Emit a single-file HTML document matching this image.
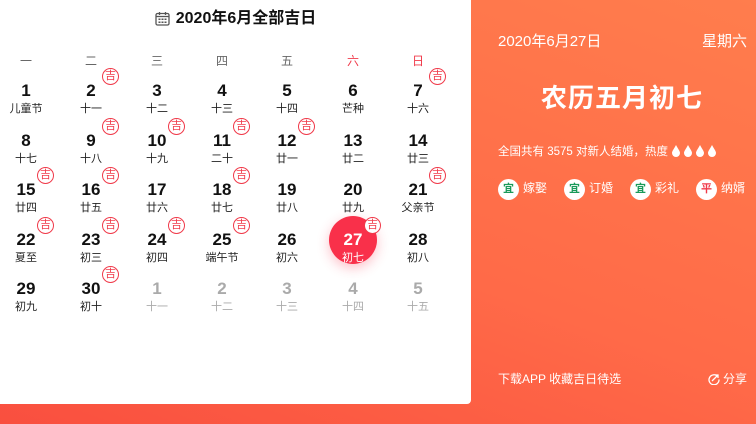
<!DOCTYPE html>
<html><head><meta charset="utf-8"><style>
*{margin:0;padding:0;box-sizing:border-box}
body{width:756px;height:424px;overflow:hidden;font-family:"Liberation Sans","Noto Sans CJK SC",sans-serif;background:linear-gradient(20deg,#f94f3f 0%,#ff6a48 45%,#ff7d4d 100%);position:relative}
.card{position:absolute;left:0;top:0;width:471px;height:404px;background:#fff;border-radius:0 0 4px 0}
.title{position:absolute;top:9px;left:0;width:471px;text-align:center;font-size:16px;font-weight:bold;color:#111;line-height:20px}
.title svg{vertical-align:-3px;margin-right:6px}
.wk{position:absolute;top:52px;width:40px;margin-left:-20px;text-align:center;font-size:12px;color:#666}
.d{position:absolute;width:56px;margin-left:-28px;text-align:center}
.n{font-size:17px;font-weight:bold;color:#111;line-height:20px;height:20px}
.l{font-size:11px;color:#222;line-height:14px;margin-top:1px}
.g .n{color:#aaa}.g .l{color:#aaa}
.ji{position:absolute;width:17px;height:17px;border:1.3px solid #f03a4a;border-radius:50%;color:#f03a4a;font-size:11px;line-height:14px;text-align:center;background:#fff}
.sel{position:absolute;left:329px;top:216px;width:48px;height:48px;border-radius:50%;background:#f9304a;box-shadow:0 4px 12px rgba(249,48,74,.3)}
.r{position:absolute;color:#fff}
.b{display:inline-block;width:21px;height:21px;border-radius:50%;background:#fff;color:#1a9a5a;font-size:11px;line-height:21px;text-align:center;margin-right:4px;font-weight:bold}
</style></head><body>
<div class="card">
<div class="title"><svg width="15" height="15" viewBox="0 0 15 15"><rect x="1" y="2.5" width="13" height="11.5" rx="1.5" fill="none" stroke="#555" stroke-width="1.3"/><line x1="1" y1="5.5" x2="14" y2="5.5" stroke="#555" stroke-width="1.3"/><line x1="4.5" y1="1" x2="4.5" y2="4" stroke="#555" stroke-width="1.3"/><line x1="10.5" y1="1" x2="10.5" y2="4" stroke="#555" stroke-width="1.3"/><g fill="#555"><rect x="3.5" y="7.5" width="2" height="1.5"/><rect x="6.5" y="7.5" width="2" height="1.5"/><rect x="9.5" y="7.5" width="2" height="1.5"/><rect x="3.5" y="10.5" width="2" height="1.5"/><rect x="6.5" y="10.5" width="2" height="1.5"/><rect x="9.5" y="10.5" width="2" height="1.5"/></g></svg>2020年6月全部吉日</div>
<div class="wk" style="left:26px">一</div><div class="wk" style="left:91px">二</div><div class="wk" style="left:157px">三</div><div class="wk" style="left:222px">四</div><div class="wk" style="left:287px">五</div><div class="wk" style="left:353px;color:#f03a4a">六</div><div class="wk" style="left:418px;color:#f03a4a">日</div>
<div id="g"></div>
</div>
<script>
var data=[["1","儿童节"],["2","十一",1],["3","十二"],["4","十三"],["5","十四"],["6","芒种"],["7","十六",1],
["8","十七"],["9","十八",1],["10","十九",1],["11","二十",1],["12","廿一",1],["13","廿二"],["14","廿三"],
["15","廿四",1],["16","廿五",1],["17","廿六"],["18","廿七",1],["19","廿八"],["20","廿九"],["21","父亲节",1],
["22","夏至",1],["23","初三",1],["24","初四",1],["25","端午节",1],["26","初六"],["27","初七",1,0,1],["28","初八"],
["29","初九"],["30","初十",1],["1","十一",0,1],["2","十二",0,1],["3","十三",0,1],["4","十四",0,1],["5","十五",0,1]];
var xs=[26,91,157,222,287,353,418],ys=[81,131,180,230,279],h="";
data.forEach(function(d,i){var x=xs[i%7],y=ys[Math.floor(i/7)];
if(d[4])h+='<div class="sel"></div>';
h+='<div class="d'+(d[3]?' g':'')+'" style="left:'+x+'px;top:'+y+'px'+(d[4]?';color:#fff':'')+'"><div class="n"'+(d[4]?' style="color:#fff"':'')+'>'+d[0]+'</div><div class="l"'+(d[4]?' style="color:#fff"':'')+'>'+d[1]+'</div></div>';
if(d[2])h+='<div class="ji" style="left:'+(x+11)+'px;top:'+(y-13)+'px">吉</div>';});
document.getElementById("g").innerHTML=h;
</script>
<div class="r" style="left:498px;top:30px;font-size:15px">2020年6月27日</div>
<div class="r" style="right:9px;top:30px;font-size:15px">星期六</div>
<div class="r" style="left:470px;width:304px;top:78px;text-align:center;font-size:26px;font-weight:bold;letter-spacing:1px">农历五月初七</div>
<div class="r" style="left:498px;top:143px;font-size:11.5px">全国共有 3575 对新人结婚，热度 <svg width="48" height="13" viewBox="0 0 48 13" style="vertical-align:-2px"><g fill="#fff"><path d="M5 1 C3 5 1 7 1 9 a4 4 0 0 0 8 0 C9 7 7 5 5 1z"/><path d="M17 1 C15 5 13 7 13 9 a4 4 0 0 0 8 0 C21 7 19 5 17 1z"/><path d="M29 1 C27 5 25 7 25 9 a4 4 0 0 0 8 0 C33 7 31 5 29 1z"/><path d="M41 1 C39 5 37 7 37 9 a4 4 0 0 0 8 0 C45 7 43 5 41 1z"/></g></svg></div>
<div class="r" style="left:498px;top:178px;font-size:12px;line-height:21px;white-space:nowrap">
<span class="b">宜</span>嫁娶<span style="display:inline-block;width:17px"></span><span class="b">宜</span>订婚<span style="display:inline-block;width:17px"></span><span class="b">宜</span>彩礼<span style="display:inline-block;width:17px"></span><span class="b" style="color:#f03a4a">平</span>纳婿</div>
<div class="r" style="left:498px;top:370px;font-size:12px">下载APP 收藏吉日待选</div>
<div class="r" style="right:9px;top:370px;font-size:12px"><svg width="12" height="12" viewBox="0 0 12 12" style="vertical-align:-2px;margin-right:3px"><path d="M9.5 3.2A5 5 0 1 0 11 6.5" fill="none" stroke="#fff" stroke-width="1.3"/><path d="M4 8 L10 2 M7 2h3v3" fill="none" stroke="#fff" stroke-width="1.3"/></svg>分享</div>
</body></html>
